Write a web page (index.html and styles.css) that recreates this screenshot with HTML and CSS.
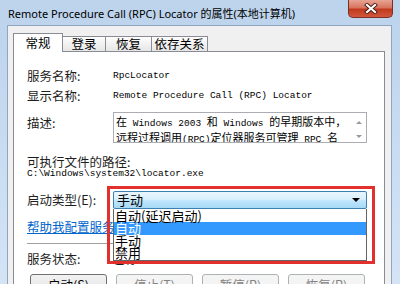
FILE: index.html
```html
<!DOCTYPE html>
<html lang="zh-CN">
<head>
  <meta charset="UTF-8">
  <meta name="viewport" content="width=device-width, initial-scale=1.0">
  <title>Remote Procedure Call (RPC) Locator 的属性(本地计算机)</title>
  <link rel="stylesheet" href="styles.css">
</head>
<body>
  <div class="window">
    <div class="titlebar">
      <span class="title">Remote Procedure Call (RPC) Locator 的属性(本地计算机)</span>
      <div class="close">
        <svg width="14" height="11" viewBox="0 0 14 11">
          <path d="M3 2 L11 9 M11 2 L3 9" stroke="#4a1a14" stroke-width="4" stroke-linecap="square"/>
          <path d="M3 2 L11 9 M11 2 L3 9" stroke="#fff" stroke-width="2.2" stroke-linecap="square"/>
        </svg>
      </div>
    </div>

    <div class="dialog">
      <div class="tabs">
        <div class="tab tab-general active">常规</div>
        <div class="tab tab-logon">登录</div>
        <div class="tab tab-recovery">恢复</div>
        <div class="tab tab-deps">依存关系</div>
      </div>

      <div class="panel">
        <div class="row row-name">
          <span class="label">服务名称:</span>
          <span class="mono">RpcLocator</span>
        </div>
        <div class="row row-display">
          <span class="label">显示名称:</span>
          <span class="mono">Remote Procedure Call (RPC) Locator</span>
        </div>
        <div class="row row-desc">
          <span class="label">描述:</span>
          <div class="textbox">
            <div class="textbox-text">
              <div><span class="cj">在</span> Windows 2003 <span class="cj">和</span> Windows <span class="cj">的早期版本中，</span></div>
              <div><span class="cj">远程过程调用</span>(RPC)<span class="cj">定位器服务可管理</span> RPC <span class="cj">名</span></div>
            </div>
            <div class="scrollbar">
              <span class="arrow up"></span>
              <span class="arrow down"></span>
            </div>
          </div>
        </div>
        <div class="path-label">可执行文件的路径:</div>
        <div class="path mono">C:\Windows\system32\locator.exe</div>

        <div class="row row-startup">
          <span class="label">启动类型(E):</span>
          <div class="combo-wrap">
            <div class="combo">
              <span>手动</span>
              <span class="combo-arrow"></span>
            </div>
            <ul class="combo-list">
              <li>自动(延迟启动)</li>
              <li class="selected">自动</li>
              <li>手动</li>
              <li>禁用</li>
            </ul>
            <div class="highlight"></div>
          </div>
        </div>

        <div class="help-link">帮助我配置服务启动选项。</div>
        <div class="separator"></div>

        <div class="row row-status">
          <span class="label">服务状态:</span>
          <span>已停止</span>
        </div>

        <div class="buttons">
          <div class="button">启动(S)</div>
          <div class="button disabled">停止(T)</div>
          <div class="button disabled">暂停(P)</div>
          <div class="button disabled">恢复(R)</div>
        </div>
      </div>
    </div>
  </div>
</body>
</html>
```

FILE: styles.css
```css
body {
  margin: 0;
  width: 400px;
  height: 284px;
  overflow: hidden;
  background: linear-gradient(to bottom, #bcd3ec, #d4e4f5);
  font-family: "Noto Sans CJK SC", "Noto Sans", sans-serif;
  font-size: 12.5px;
  color: #1e1e1e;
}

.window {
  display: flex;
  flex-direction: column;
  height: 284px;
}

/* Title bar */
.titlebar {
  height: 25px;
  flex: none;
  display: flex;
}

.title {
  padding-left: 8px;
  line-height: 27px;
  font-family: "Noto Sans", "Noto Sans CJK SC", sans-serif;
  font-size: 11px;
  color: #000;
  white-space: nowrap;
}

.close {
  margin-left: auto;
  margin-right: 7px;
  width: 45px;
  height: 18px;
  box-sizing: border-box;
  border: 1px solid #7a2e24;
  border-top: none;
  border-radius: 0 0 5px 5px;
  background: linear-gradient(to bottom, #e8a493 0%, #d8745f 45%, #c0391f 55%, #d2573a 100%);
  display: flex;
  align-items: center;
  justify-content: center;
}

/* Dialog body */
.dialog {
  flex: 1;
  margin: 0 8px 0 7px;
  border: 1px solid #90a6c0;
  border-bottom: none;
  background: #f0f0f0;
  padding: 7px 6px 0 5px;
  display: flex;
  flex-direction: column;
  min-height: 0;
}

.tabs {
  display: flex;
  align-items: flex-end;
  height: 18px;
  flex: none;
  position: relative;
  z-index: 1;
}

.tab {
  height: 15px;
  box-sizing: border-box;
  margin-left: -1px;
  border: 1px solid #898c95;
  border-bottom: none;
  background: linear-gradient(to bottom, #fdfdfd, #e6e6e6);
  text-align: center;
  line-height: 14px;
  font-size: 12.5px;
  color: #000;
}

.tab-general { width: 50px; }
.tab-logon { width: 44px; }
.tab-recovery { width: 47px; }
.tab-deps { width: 57px; }

.tab.active {
  height: 19px;
  margin-left: 0;
  margin-bottom: -1px;
  background: #fff;
  line-height: 17px;
  position: relative;
  z-index: 2;
}

.panel {
  flex: 1;
  background: #fff;
  border: 1px solid #898c95;
  padding: 0 17px 0 13px;
  display: flex;
  flex-direction: column;
}

.row {
  display: flex;
  align-items: center;
}

.label {
  width: 86px;
  flex: none;
}

.mono {
  font-family: "Liberation Mono", "Noto Sans CJK SC", monospace;
  font-size: 9.5px;
  color: #000;
}

.row-name {
  margin-top: 15px;
  height: 16px;
}

.row-display {
  margin-top: 4px;
  height: 16px;
}

.row-desc {
  margin-top: 9px;
  align-items: flex-start;
}

.row-desc .label {
  margin-top: 3px;
  line-height: 16px;
}

.textbox {
  flex: 1;
  height: 31px;
  box-sizing: border-box;
  border: 1px solid #abadb3;
  display: flex;
}

.textbox-text {
  flex: 1;
  padding: 2px 0 0 2px;
  font-family: "Liberation Mono", "Noto Sans CJK SC", monospace;
  font-size: 9.5px;
  line-height: 12.5px;
  color: #000;
  white-space: nowrap;
  overflow: hidden;
}

.cj {
  font-family: "Noto Sans CJK SC", sans-serif;
  font-size: 11px;
}

.scrollbar {
  width: 14px;
  display: flex;
  flex-direction: column;
  justify-content: space-between;
  align-items: center;
  padding: 8px 0 4px;
}

.arrow {
  width: 0;
  height: 0;
  border-left: 3px solid transparent;
  border-right: 3px solid transparent;
}

.arrow.up {
  border-bottom: 3px solid #9a9a9a;
}

.arrow.down {
  border-top: 3px solid #9a9a9a;
}

.path-label {
  margin-top: 12px;
  line-height: 14px;
}

.path {
  line-height: 10px;
}

/* Startup type combo */
.row-startup {
  margin-top: 11px;
}

.combo-wrap {
  flex: 1;
  position: relative;
}

.combo {
  height: 18px;
  box-sizing: border-box;
  border: 1px solid #3c7fb1;
  border-radius: 2px;
  background: linear-gradient(to bottom, #eaf6fd 0%, #d9f0fc 45%, #bee6fd 55%, #a7d9f5 100%);
  display: flex;
  align-items: center;
  padding: 0 6px 0 3px;
  font-size: 13px;
  color: #000;
}

.combo-arrow {
  margin-left: auto;
  width: 0;
  height: 0;
  border-left: 4px solid transparent;
  border-right: 4px solid transparent;
  border-top: 4px solid #000;
}

.combo-list {
  position: absolute;
  top: 18px;
  left: 0;
  right: 0;
  margin: 0;
  padding: 1px 0 0;
  list-style: none;
  background: #fff;
  border: 1px solid #646464;
  border-top: none;
  height: 50px;
  z-index: 3;
  font-size: 13px;
  color: #000;
}

.combo-list li {
  height: 12.5px;
  line-height: 12.5px;
  padding-left: 1px;
}

.combo-list li.selected {
  background: #3399ff;
  color: #fff;
}

.highlight {
  position: absolute;
  top: -5px;
  left: -6px;
  width: 268px;
  height: 78px;
  box-sizing: border-box;
  border: 3px solid #e2302c;
  z-index: 4;
}

.help-link {
  margin-top: 10px;
  line-height: 16px;
  color: #0066cc;
  text-decoration: underline;
}

.separator {
  margin-top: 8px;
  height: 1px;
  background: #a0a0a0;
}

.row-status {
  margin-top: 6px;
  height: 16px;
}

.buttons {
  margin-top: 8px;
  display: flex;
  gap: 9px;
  padding-left: 3px;
}

.button {
  width: 77px;
  height: 22px;
  box-sizing: border-box;
  border: 1px solid #707070;
  border-radius: 3px;
  background: linear-gradient(to bottom, #f2f2f2 0%, #ebebeb 45%, #dddddd 55%, #cfcfcf 100%);
  text-align: center;
  line-height: 20px;
  font-size: 12.5px;
  color: #000;
}

.button.disabled {
  border-color: #adb2b5;
  background: #f4f4f4;
  color: #838383;
}
```
